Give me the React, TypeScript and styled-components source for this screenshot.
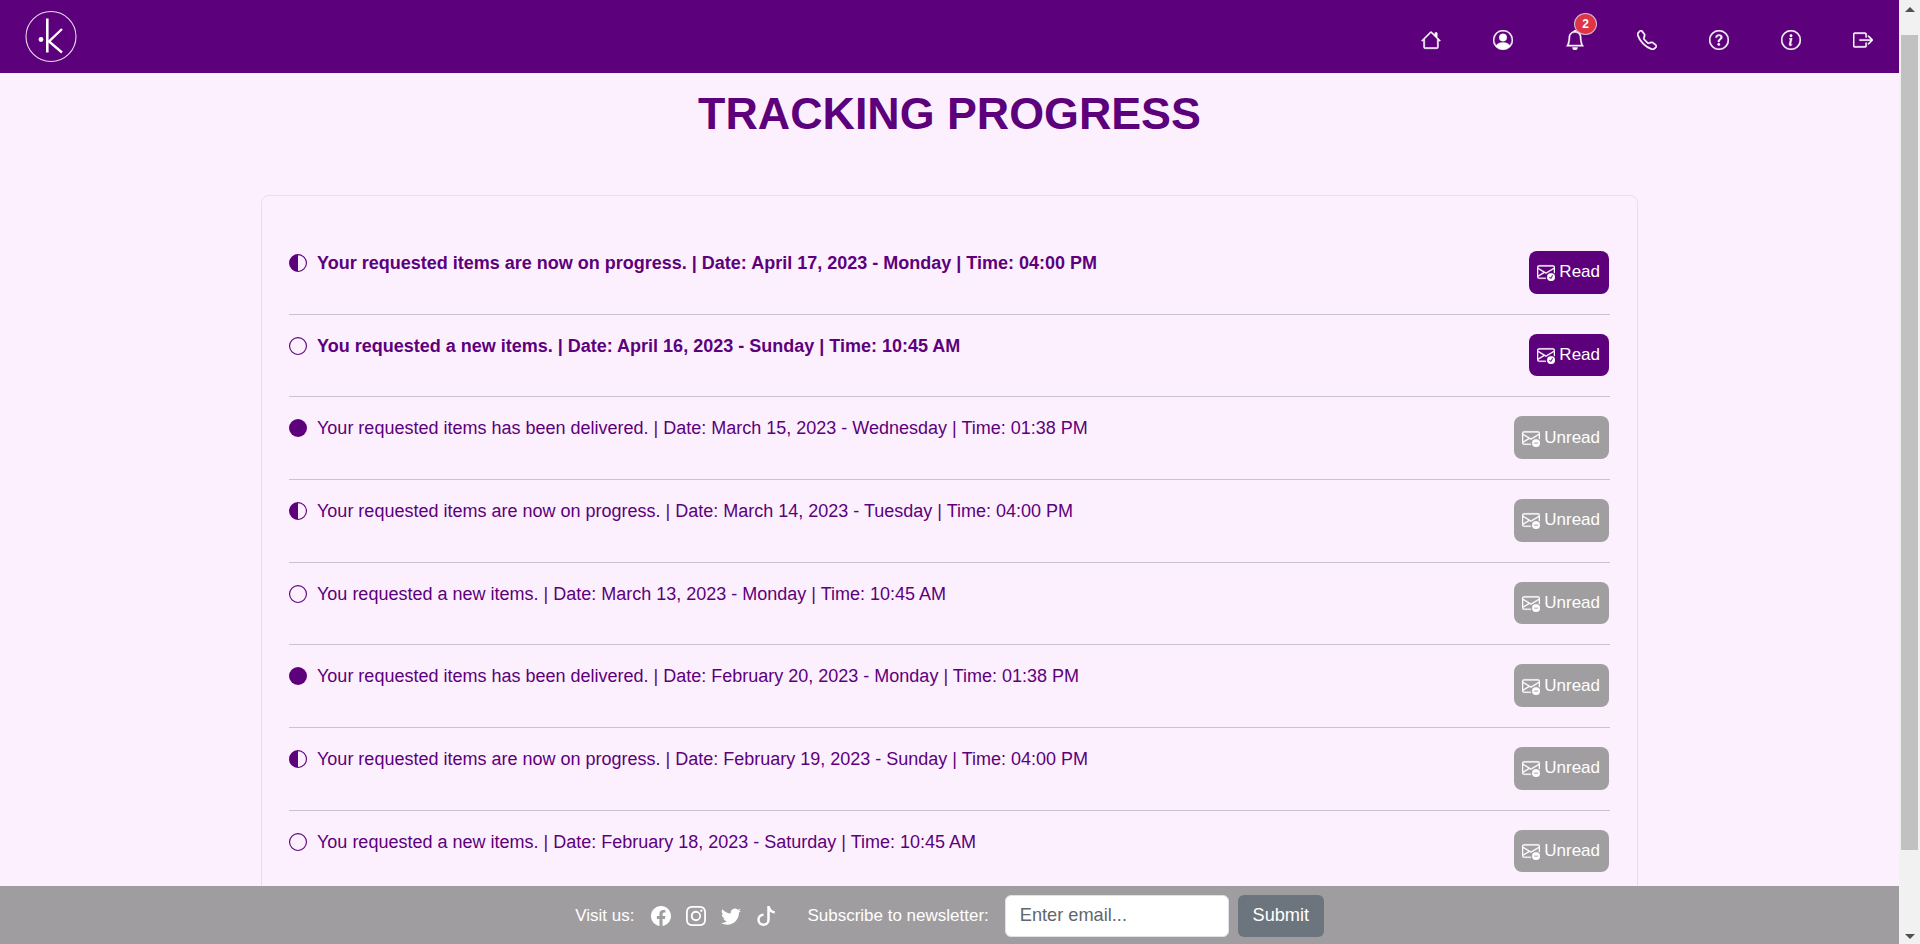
import React from "react"
import styled, { createGlobalStyle } from "styled-components"
import {
  BsBell,
  BsBoxArrowRight,
  BsCircle,
  BsCircleFill,
  BsCircleHalf,
  BsEnvelopeCheck,
  BsEnvelopeDash,
  BsFacebook,
  BsHouse,
  BsInfoCircle,
  BsInstagram,
  BsPersonCircle,
  BsQuestionCircle,
  BsTelephone,
  BsTiktok,
  BsTwitter,
} from "react-icons/bs"

const purple = "#5d007b"
const grey = "#9f9d9f"

const GlobalStyle = createGlobalStyle`
  html, body {
    margin: 0;
    height: 100%;
    overflow: hidden;
  }
  body {
    font-family: "Liberation Sans", Arial, sans-serif;
    background: #fcf0ff;
  }
  * {
    box-sizing: border-box;
  }
`

const Shell = styled.div`
  display: flex;
  height: 100vh;
`

const Page = styled.div`
  display: flex;
  flex: 1;
  flex-direction: column;
  min-width: 0;
`

const Header = styled.header`
  display: flex;
  flex: none;
  height: 73px;
  align-items: center;
  justify-content: space-between;
  padding: 0 26px 0 25px;
  background: ${purple};
`

const Nav = styled.nav`
  display: flex;
  gap: 52px;
  padding-top: 7px;
`

const NavItem = styled.a`
  position: relative;
  display: block;
  width: 20px;
  height: 20px;
  color: #fff;
  font-size: 20px;
  line-height: 0;

  svg {
    stroke: currentColor;
    stroke-width: 0.35;
  }
`

const Badge = styled.span`
  position: absolute;
  top: -17px;
  left: 9px;
  display: flex;
  width: 23px;
  height: 22px;
  align-items: center;
  justify-content: center;
  border: 1px solid #d9b8dc;
  border-radius: 50%;
  background: #dc3545;
  color: #fff;
  font-size: 12px;
  font-weight: 700;
  line-height: 1;
`

const Main = styled.main`
  flex: 1;
  min-height: 0;
  overflow: hidden;
`

const Title = styled.h1`
  margin: 13px 0 55px;
  color: ${purple};
  font-size: 44.8px;
  font-weight: 700;
  line-height: 54px;
  text-align: center;
`

const Card = styled.section`
  width: 1377px;
  margin: 0 auto;
  padding: 36px 27px 0;
  border: 1px solid #e4e0ee;
  border-radius: 8px;
`

const Row = styled.div`
  display: flex;
  align-items: flex-start;
  justify-content: space-between;
  padding: 19px 0 20px;
  border-bottom: 1px solid #cbc2cf;
`

const Message = styled.div<{ $unread: boolean }>`
  display: flex;
  align-items: center;
  gap: 10px;
  color: ${purple};
  font-size: 18px;
  font-weight: ${(p) => (p.$unread ? 700 : 400)};
  line-height: 24px;

  svg {
    flex: none;
    font-size: 18px;
  }
`

const MarkButton = styled.button<{ $unread: boolean }>`
  display: inline-flex;
  height: 42.67px;
  align-items: center;
  gap: 4px;
  margin-right: 1px;
  padding: 0 9px 0 8px;
  border: 0;
  border-radius: 8px;
  background: ${(p) => (p.$unread ? purple : "#a09ea0")};
  color: #fff;
  font-family: inherit;
  font-size: 17px;

  svg {
    font-size: 18px;
    stroke: currentColor;
    stroke-width: 0.25;
  }
`

const Footer = styled.footer`
  display: flex;
  flex: none;
  height: 58px;
  align-items: center;
  justify-content: center;
  padding-top: 1px;
  background: ${grey};
  color: #fff;
  font-size: 17px;
`

const Socials = styled.div`
  display: flex;
  gap: 15px;
  margin: 0 31px 0 17px;
  font-size: 20px;
  line-height: 0;
`

const EmailInput = styled.input`
  width: 224px;
  height: 42px;
  margin: 0 9px 0 16px;
  padding: 0 14px;
  border: 1px solid #dee2e6;
  border-radius: 6px;
  background: #fff;
  font-family: inherit;
  font-size: 18.2px;

  &::placeholder {
    color: #5f666d;
    opacity: 1;
  }
`

const SubmitButton = styled.button`
  width: 86px;
  height: 42px;
  padding: 0;
  border: 0;
  border-radius: 6px;
  background: #6c757d;
  color: #fff;
  font-family: inherit;
  font-size: 18.2px;
`

const Scrollbar = styled.div`
  display: flex;
  flex: none;
  width: 21px;
  flex-direction: column;
  align-items: center;
  background: #f1f1f1;
`

const ScrollArrow = styled.div<{ $down?: boolean }>`
  flex: none;
  width: 0;
  height: 0;
  margin: ${(p) => (p.$down ? "0 0 5px" : "7px 0 0")};
  border-right: 5px solid transparent;
  border-left: 5px solid transparent;
  border-top: ${(p) => (p.$down ? "5px solid #505050" : "0")};
  border-bottom: ${(p) => (p.$down ? "0" : "5px solid #505050")};
`

const ScrollThumb = styled.div`
  width: 17px;
  height: 815px;
  margin: 23px 0 auto;
  background: #c1c1c1;
`

type Status = "new" | "progress" | "delivered"

const statusIcons = {
  new: <BsCircle />,
  progress: <BsCircleHalf />,
  delivered: <BsCircleFill />,
}

const notifications: { status: Status; text: string; unread: boolean }[] = [
  { status: "progress", text: "Your requested items are now on progress. | Date: April 17, 2023 - Monday | Time: 04:00 PM", unread: true },
  { status: "new", text: "You requested a new items. | Date: April 16, 2023 - Sunday | Time: 10:45 AM", unread: true },
  { status: "delivered", text: "Your requested items has been delivered. | Date: March 15, 2023 - Wednesday | Time: 01:38 PM", unread: false },
  { status: "progress", text: "Your requested items are now on progress. | Date: March 14, 2023 - Tuesday | Time: 04:00 PM", unread: false },
  { status: "new", text: "You requested a new items. | Date: March 13, 2023 - Monday | Time: 10:45 AM", unread: false },
  { status: "delivered", text: "Your requested items has been delivered. | Date: February 20, 2023 - Monday | Time: 01:38 PM", unread: false },
  { status: "progress", text: "Your requested items are now on progress. | Date: February 19, 2023 - Sunday | Time: 04:00 PM", unread: false },
  { status: "new", text: "You requested a new items. | Date: February 18, 2023 - Saturday | Time: 10:45 AM", unread: false },
]

function Logo() {
  return (
    <svg width="54" height="54" viewBox="0 0 54 54" fill="none" stroke="#fff">
      <circle cx="26" cy="26.5" r="25" strokeWidth="1.1" opacity="0.85" />
      <circle cx="16" cy="29.5" r="2.4" fill="#fff" stroke="none" />
      <path d="M22.3 8.5V42.5" strokeWidth="2.6" />
      <path d="M37 19L24 31.5L37 42.5" strokeWidth="2.4" />
    </svg>
  )
}

export default function App() {
  return (
    <Shell>
      <GlobalStyle />
      <Page>
        <Header>
          <Logo />
          <Nav>
            <NavItem><BsHouse /></NavItem>
            <NavItem><BsPersonCircle /></NavItem>
            <NavItem>
              <BsBell />
              <Badge>2</Badge>
            </NavItem>
            <NavItem><BsTelephone /></NavItem>
            <NavItem><BsQuestionCircle /></NavItem>
            <NavItem><BsInfoCircle /></NavItem>
            <NavItem><BsBoxArrowRight /></NavItem>
          </Nav>
        </Header>
        <Main>
          <Title>TRACKING PROGRESS</Title>
          <Card>
            {notifications.map((n) => (
              <Row key={n.text}>
                <Message $unread={n.unread}>
                  {statusIcons[n.status]}
                  {n.text}
                </Message>
                <MarkButton $unread={n.unread}>
                  {n.unread ? <BsEnvelopeCheck /> : <BsEnvelopeDash />}
                  {n.unread ? "Read" : "Unread"}
                </MarkButton>
              </Row>
            ))}
          </Card>
        </Main>
        <Footer>
          Visit us:
          <Socials>
            <BsFacebook />
            <BsInstagram />
            <BsTwitter />
            <BsTiktok />
          </Socials>
          Subscribe to newsletter:
          <EmailInput placeholder="Enter email..." />
          <SubmitButton>Submit</SubmitButton>
        </Footer>
      </Page>
      <Scrollbar>
        <ScrollArrow />
        <ScrollThumb />
        <ScrollArrow $down />
      </Scrollbar>
    </Shell>
  )
}
